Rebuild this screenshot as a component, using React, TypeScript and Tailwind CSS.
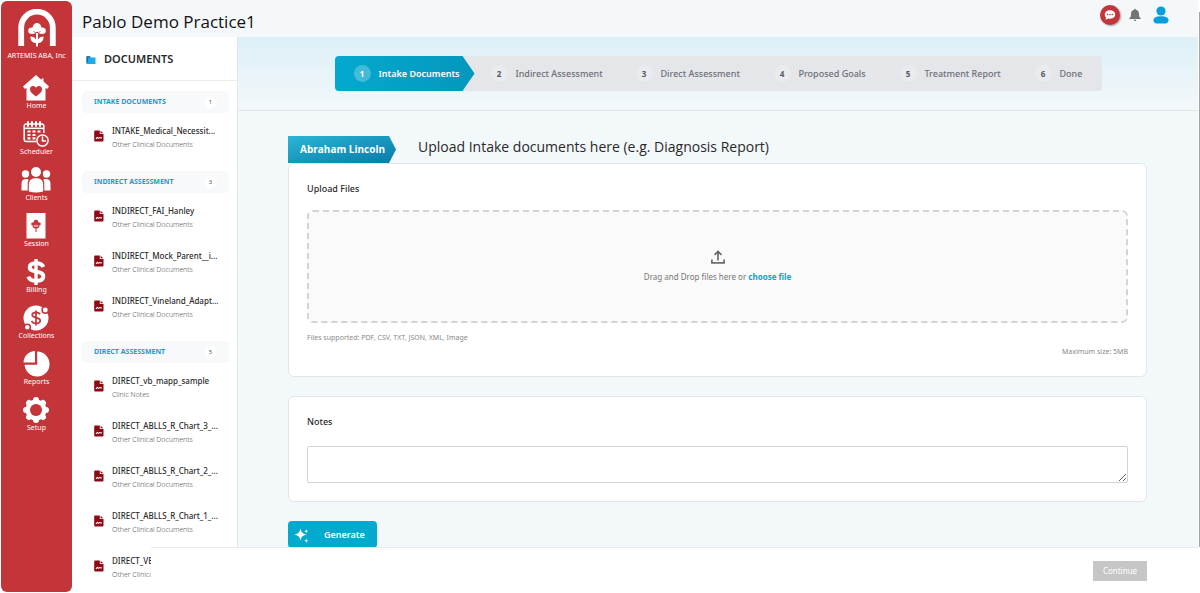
import type { ReactNode } from "react";

type Doc = { name: string; kind: string };

const groups: { title: string; count: number; docs: Doc[] }[] = [
  {
    title: "INTAKE DOCUMENTS",
    count: 1,
    docs: [{ name: "INTAKE_Medical_Necessit...", kind: "Other Clinical Documents" }],
  },
  {
    title: "INDIRECT ASSESSMENT",
    count: 3,
    docs: [
      { name: "INDIRECT_FAI_Hanley", kind: "Other Clinical Documents" },
      { name: "INDIRECT_Mock_Parent__i...", kind: "Other Clinical Documents" },
      { name: "INDIRECT_Vineland_Adapt...", kind: "Other Clinical Documents" },
    ],
  },
  {
    title: "DIRECT ASSESSMENT",
    count: 5,
    docs: [
      { name: "DIRECT_vb_mapp_sample", kind: "Clinic Notes" },
      { name: "DIRECT_ABLLS_R_Chart_3_...", kind: "Other Clinical Documents" },
      { name: "DIRECT_ABLLS_R_Chart_2_...", kind: "Other Clinical Documents" },
      { name: "DIRECT_ABLLS_R_Chart_1_...", kind: "Other Clinical Documents" },
      { name: "DIRECT_VB_MAPP", kind: "Other Clinical Documents" },
    ],
  },
];

const steps = [
  { label: "Intake Documents", width: "w-[140px]" },
  { label: "Indirect Assessment", width: "w-[145px]" },
  { label: "Direct Assessment", width: "w-[138px]" },
  { label: "Proposed Goals", width: "w-[126px]" },
  { label: "Treatment Report", width: "w-[135px]" },
  { label: "Done", width: "w-[83px]" },
];

const navItems: { label: string; icon: ReactNode }[] = [
  {
    label: "Home",
    icon: (
      <>
        <path d="M13 0 0 11.5 1.8 14 3.5 12.8V25.5h19V12.8l1.7 1.2L26 11.5 20.5 6.600V3.500h-2v1.400Z" fill="#fff" />
        <path d="M13 21.500C8.500 18 7 16.500 7 14.200c0-3.200 4-4.300 6-1.500 2-2.800 6-1.700 6 1.500 0 2.300-1.500 3.800-6 7.300Z" fill="#c4353a" />
      </>
    ),
  },
  {
    label: "Scheduler",
    icon: (
      <g fill="none" stroke="#fff" strokeWidth="1.500">
        <path d="M13 20.500H3.500a2.300 2.300 0 0 1-2.300-2.300V5a2 2 0 0 1 2-2h15.600a2 2 0 0 1 2 2v7" />
        <path d="M2 7.300h18.500" />
        <path d="M5 1v4M9 1v4M13 1v4M17 1v4" strokeWidth="2" strokeLinecap="round" />
        <path d="M4.500 10.500h3M9.500 10.500h3M14.500 10.500h3M4.500 14h3M9.500 14h3M4.500 17.300h3M9.500 17.300h3" strokeWidth="2.200" />
        <circle cx="19.500" cy="19.500" r="5.600" />
        <path d="M19.500 16v4h3" strokeLinecap="round" />
      </g>
    ),
  },
  {
    label: "Clients",
    icon: (
      <g fill="#fff">
        <circle cx="13" cy="5" r="5" />
        <circle cx="2.500" cy="7" r="3.700" />
        <circle cx="23.500" cy="7" r="3.700" />
        <path d="M5.800 24.500v-7c0-4.400 3-6.300 7.200-6.300s7.200 1.900 7.200 6.300v7q-7.200 2-14.400 0Z" />
        <path d="M4.700 23.500H-1.500v-7c0-3.300 2-4.700 6-4.400 1 .1 1.200.6.900 1.200-.7 1.600-.7 2.500-.7 4.200ZM21.300 23.500h6.200v-7c0-3.300-2-4.700-6-4.400-1 .1-1.200.6-.9 1.200.7 1.600.7 2.500.7 4.200Z" />
      </g>
    ),
  },
  {
    label: "Session",
    icon: (
      <>
        <path d="M3.500 0h19v25.500h-19Z" fill="#fff" />
        <g fill="#c4353a">
          <circle cx="13" cy="9" r="2.300" />
          <ellipse cx="10.500" cy="11" rx="2.400" ry="1.800" />
          <ellipse cx="15.500" cy="11" rx="2.400" ry="1.800" />
          <path d="M12.500 10h1v4l3-1.500c0 2-1 2.800-3 3V19h-1v-3.500c-2-.2-3-1-3-3l3 1.500Z" />
        </g>
      </>
    ),
  },
  {
    label: "Billing",
    icon: (
      <g fill="none" stroke="#fff">
        <path
          d="M20.300 8C19.300 5.200 17 4.300 13 4.300c-3.900 0-6.300 1.500-6.300 4.100 0 5.800 13.600 2.700 13.600 9 0 2.900-2.700 4.400-7.100 4.400-4 0-6.800-1.200-7.900-4.200"
          strokeWidth="4"
        />
        <path d="M13 0v26" strokeWidth="3.400" />
      </g>
    ),
  },
  {
    label: "Collections",
    icon: (
      <>
        <circle cx="13" cy="13" r="12.500" fill="#fff" />
        <path d="M17 9.300c-.7-1.400-2-2-4-2-2.300 0-3.800 1-3.800 2.700 0 3.600 8 1.700 8 5.500 0 1.900-1.600 2.900-4.200 2.900-2.200 0-3.800-.8-4.400-2.400M13 5.500v15" fill="none" stroke="#c4353a" strokeWidth="1.700" />
        <g fill="#fff" stroke="#c4353a" strokeWidth="1.500">
          <circle cx="22.300" cy="5" r="3.200" />
          <circle cx="4.300" cy="22.300" r="3" />
        </g>
      </>
    ),
  },
  {
    label: "Reports",
    icon: (
      <g fill="#fff">
        <path d="M14.200 0.600A12.500 12.500 0 1 1 1.600 13.800H14.200Z" />
        <path d="M12 0v11.600H.5A11.800 11.800 0 0 1 12 0Z" />
      </g>
    ),
  },
  {
    label: "Setup",
    icon: (
      <>
        <circle cx="13" cy="13" r="8" fill="none" stroke="#fff" strokeWidth="5" />
        <g stroke="#fff" strokeWidth="6" strokeLinecap="round">
          <path d="M13 3v.5M13 22.500v.5M3 13h.5M22.500 13h.5M6 6l.3.3M19.700 19.700l.3.300M6 20l.3-.3M19.700 6.300 20 6" />
        </g>
        <circle cx="13" cy="13" r="6" fill="#c4353a" />
      </>
    ),
  },
];

function Logo() {
  return (
    <svg viewBox="0 0 38 38" className="h-[38px] w-[38px]" aria-hidden="true">
      <path d="M3.200 37V18.500a15.800 15.800 0 0 1 31.600 0V37" fill="none" stroke="#fff" strokeWidth="5.800" />
      <g fill="#fff">
        <circle cx="19" cy="18.500" r="4.400" />
        <ellipse cx="14.200" cy="21.800" rx="4" ry="3.300" />
        <ellipse cx="23.800" cy="21.800" rx="4" ry="3.300" />
        <path d="M18.700 34c-4.500 0-6.400-2.600-6.200-6.600 4 .2 6.200 2.300 6.200 6.600ZM19.300 34c4.500 0 6.400-2.600 6.200-6.600-4 .2-6.200 2.300-6.200 6.600Z" />
      </g>
      <path d="m15.500 22 3.500 3.500 3.500-3.500" fill="none" stroke="#c4353a" strokeWidth=".8" />
      <path d="M19 24v13.500" stroke="#fff" strokeWidth="2" />
    </svg>
  );
}

function FileIcon() {
  return (
    <svg viewBox="0 0 10 12" className="mt-[6px] h-3 w-[10px] shrink-0" aria-hidden="true">
      <path d="M1.200.500h4.600v3.400h3.700v6.700a1 1 0 0 1-1 1H1.200a1 1 0 0 1-1-1v-9a1 1 0 0 1 1-1.100Z" fill="#8b0a14" />
      <path d="M6.600.700 9.300 3.200H6.600Z" fill="#8b0a14" />
      <path d="M1.800 8.800c1 0 1-1.400 1.600-1.400s.4 1 1.100.8.800-.6 1.300-.6.600.3 2 .3" fill="none" stroke="#fff" strokeWidth="1.100" />
    </svg>
  );
}

function SideNav() {
  return (
    <nav className="mt-px mb-px ml-px flex w-[71px] shrink-0 flex-col items-center rounded-md bg-[#c4353a] pt-2 text-white">
      <Logo />
      <p className="mt-1 text-[7px] leading-[10px] whitespace-nowrap">ARTEMIS ABA, Inc</p>
      <ul className="mt-[14px] flex flex-col gap-[10px]">
        {navItems.map((item) => (
          <li key={item.label}>
            <a href="#" className="flex flex-col items-center">
              <svg viewBox="0 0 26 26" className="h-[26px] w-[26px] overflow-visible" aria-hidden="true">
                {item.icon}
              </svg>
              <span className="text-[7px] leading-[10px]">{item.label}</span>
            </a>
          </li>
        ))}
      </ul>
    </nav>
  );
}

function TopBar() {
  return (
    <header className="flex h-[37px] shrink-0 items-center justify-between bg-[#f5f8fb] pt-[6px] pr-[29px] pl-[10px]">
      <h1 className="font-['Open_Sans',sans-serif] text-[17px] leading-6 text-[#111]">Pablo Demo Practice1</h1>
      <div className="mb-[14px] flex items-center gap-[9px]">
        <button aria-label="Messages" className="flex h-5 w-5 items-center justify-center rounded-full bg-[#c4353a] shadow-[1px_1px_2px_#999]">
          <svg viewBox="0 0 12 12" className="h-3 w-3" aria-hidden="true">
            <path d="M6 1.300c3 0 5.200 1.800 5.200 4.200S9 9.700 6 9.700c-.7 0-1.300-.1-1.900-.2-.8.800-1.700 1.100-2.900 1.100.6-.7.900-1.300.9-2C1.200 7.800.8 6.700.8 5.500.8 3.100 3 1.300 6 1.300Z" fill="#fff" />
            <g fill="#c4353a">
              <circle cx="3.600" cy="5.500" r=".8" />
              <circle cx="6" cy="5.500" r=".8" />
              <circle cx="8.400" cy="5.500" r=".8" />
            </g>
          </svg>
        </button>
        <button aria-label="Notifications">
          <svg viewBox="0 0 12 14" className="h-[14px] w-3" aria-hidden="true">
            <path d="M6 .8c.6 0 .9.400.9.900C9 2.200 10 3.900 10 6c0 2.800.6 3.600 1.800 4.300V11H.2v-.7C1.400 9.600 2 8.800 2 6c0-2.100 1-3.800 3.100-4.300 0-.5.3-.9.9-.9ZM4.800 11.700h2.400c0 .8-.5 1.300-1.200 1.300s-1.200-.5-1.200-1.300Z" fill="#747474" />
          </svg>
        </button>
        <button aria-label="Account" className="ml-[3px]">
          <svg viewBox="0 0 16 18" className="h-[18px] w-4" aria-hidden="true">
            <circle cx="8" cy="5" r="4.600" fill="#069edb" />
            <path d="M8 10.300c4.700 0 7.500 1.200 7.500 4 0 2-1.300 3.200-3.200 3.200H3.700c-1.900 0-3.200-1.200-3.200-3.200 0-2.800 2.800-4 7.500-4Z" fill="#069edb" />
          </svg>
        </button>
      </div>
    </header>
  );
}

function DocumentsPanel() {
  return (
    <aside className="w-[166px] shrink-0 overflow-hidden border-r border-[#e3e8ea] bg-white">
      <div className="flex h-[44px] items-center gap-2 border-b border-[#ececec] pt-[2px] pl-[14px]">
        <svg viewBox="0 0 10 8" className="h-2 w-[10px]" aria-hidden="true">
          <path d="M.500.200h3.300l1 1.300H9.500V8H.5Z" fill="#1cabe3" />
          <path d="M.500.200h3.300l1 1.300H1.800V6L.5 7Z" fill="#14679c" />
        </svg>
        <h2 className="text-[11px] font-semibold text-[#292929]">DOCUMENTS</h2>
      </div>
      <div className="flex flex-col gap-[13px] pt-[10px] pr-2 pl-[10px]">
        {groups.map((group) => (
          <section key={group.title}>
            <div className="flex h-[22px] items-center justify-between rounded-sm bg-[#f7f9fa] px-3">
              <h3 className="text-[7px] font-bold text-[#159fc5]">{group.title}</h3>
              <span className="flex h-[13px] w-[13px] items-center justify-center rounded-full bg-white text-[6px] text-[#555]">
                {group.count}
              </span>
            </div>
            <ul>
              {group.docs.map((doc) => (
                <li key={doc.name} className="flex h-[45px] gap-2 pt-[11px] pl-3">
                  <FileIcon />
                  <div className="whitespace-nowrap">
                    <p className="text-[8px] leading-[14px] font-medium text-[#2b2b2b]">{doc.name}</p>
                    <p className="text-[7px] leading-[14px] font-light text-[#555]">{doc.kind}</p>
                  </div>
                </li>
              ))}
            </ul>
          </section>
        ))}
      </div>
    </aside>
  );
}

function Stepper() {
  return (
    <div className="flex h-[74px] items-center justify-center border-b border-[#dfe5e8] bg-linear-to-b from-[#dcf0f7] to-[#f3f8fa]">
      <ol className="flex h-[35px] overflow-hidden rounded-sm bg-[#e4e6ea]">
        {steps.map((step, i) => (
          <li
            key={step.label}
            className={
              i === 0
                ? "flex w-[140px] items-center gap-2 bg-linear-to-r from-[#04a9cf] to-[#0497bd] pl-[19px] text-white [clip-path:polygon(0_0,128px_0,100%_50%,128px_100%,0_100%)]"
                : `flex items-center gap-2 pl-4 text-[#6b7077] ${step.width}`
            }
          >
            <span
              className={
                i === 0
                  ? "flex h-[17px] w-[17px] items-center justify-center rounded-full bg-white/25 text-[8px] font-bold"
                  : "flex h-[17px] w-[17px] items-center justify-center rounded-full bg-[#e9ebee] text-[8px] font-bold text-[#555b63]"
              }
            >
              {i + 1}
            </span>
            <span
              className={
                i === 0
                  ? "text-[9px] font-semibold whitespace-nowrap"
                  : "text-[9px] font-medium whitespace-nowrap"
              }
            >
              {step.label}
            </span>
          </li>
        ))}
      </ol>
    </div>
  );
}

function UploadCard() {
  return (
    <section className="rounded-md border border-[#e1e6e9] bg-white px-[18px] pt-[18px] pb-[17px]">
      <h3 className="text-[9px] leading-[14px] font-medium text-[#2b2b2b]">Upload Files</h3>
      <div className="mt-[14px] flex h-[113px] flex-col items-center justify-center rounded-md border-2 border-dashed border-[#d4d4d4] bg-[#fafafa]">
        <svg viewBox="0 0 14 14" className="h-[14px] w-[14px]" fill="none" stroke="#6b6b6b" strokeWidth="1.700" aria-hidden="true">
          <path d="M.9 9.500v3.400h12.200V9.500M7 10.500V1.500M3.500 4.800 7 1.400l3.500 3.400" />
        </svg>
        <p className="mt-[6px] text-[8px] leading-[14px] text-[#777]">
          Drag and Drop files here or{" "}
          <a href="#" className="font-bold text-[#159fc5]">
            choose file
          </a>
        </p>
      </div>
      <p className="mt-2 text-[7px] leading-[14px] text-[#8a8a8a]">Files supported: PDF, CSV, TXT, JSON, XML, Image</p>
      <p className="text-right text-[7px] leading-[14px] text-[#8a8a8a]">Maximum size: 5MB</p>
    </section>
  );
}

function NotesCard() {
  return (
    <section className="mt-[19px] rounded-md border border-[#e1e6e9] bg-white px-[18px] pt-[18px] pb-[18px]">
      <label htmlFor="notes" className="block text-[9px] leading-[14px] font-medium text-[#2b2b2b]">
        Notes
      </label>
      <textarea id="notes" className="mt-[17px] block h-[37px] w-full rounded-xs border border-[#d2d5d8] bg-white" />
    </section>
  );
}

export default function App() {
  return (
    <div className="relative flex h-screen overflow-hidden bg-white font-['Noto_Sans',sans-serif]">
      <SideNav />
      <div className="flex min-w-0 flex-1 flex-col pr-[2px]">
        <TopBar />
        <div className="flex min-h-0 flex-1">
          <DocumentsPanel />
          <main className="min-w-0 flex-1 overflow-hidden bg-[#f3f8fa]">
            <Stepper />
            <div className="pt-[25px] pr-[51px] pl-[50px]">
              <div className="flex h-[27px] items-center">
                <div className="flex h-[27px] w-[108px] items-center bg-linear-to-br from-[#2ab5d5] to-[#067ba9] pl-3 font-['Open_Sans',sans-serif] text-[10px] font-bold whitespace-nowrap text-white [clip-path:polygon(0_0,101px_0,100%_50%,101px_100%,0_100%)]">
                  Abraham Lincoln
                </div>
                <h2 className="mb-[6px] ml-[22px] font-['Open_Sans',sans-serif] text-[14px] font-medium text-[#292929]">
                  Upload Intake documents here (e.g. Diagnosis Report)
                </h2>
              </div>
              <UploadCard />
              <NotesCard />
              <button className="mt-[19px] flex h-[27px] w-[89px] items-center gap-[14px] rounded-sm bg-[#04a9cf] pl-[6px] text-[9px] font-semibold text-white">
                <svg viewBox="0 0 16 16" className="h-4 w-4" fill="#fff" aria-hidden="true">
                  <path d="M6.500 1c.6 4 1.800 5.500 6 6.500-4.200 1-5.400 2.500-6 6.500-.6-4-1.800-5.500-6-6.500 4.200-1 5.400-2.500 6-6.500ZM12.300 2c.2 1.300.6 1.900 2.200 2.200-1.600.3-2 .9-2.200 2.200-.2-1.300-.6-1.900-2.200-2.200 1.600-.3 2-.9 2.200-2.200ZM12.300 11.500c.2 1.300.6 1.900 2.200 2.200-1.600.3-2 .9-2.200 2.200-.2-1.300-.6-1.900-2.200-2.200 1.600-.3 2-.9 2.200-2.200Z" />
                </svg>
                Generate
              </button>
            </div>
          </main>
        </div>
      </div>
      {/* action bar floats over the panel and the form */}
      <footer className="absolute right-[2px] bottom-0 left-[151px] flex h-[46px] items-center justify-end border-t border-[#e6ebee] bg-white pr-[51px]">
        <button className="h-5 w-[54px] bg-[#c6c6c6] text-[8px] text-white">Continue</button>
      </footer>
      <div className="absolute top-3 right-0 bottom-[46px] w-px bg-[#a5a5a5]" />
    </div>
  );
}
